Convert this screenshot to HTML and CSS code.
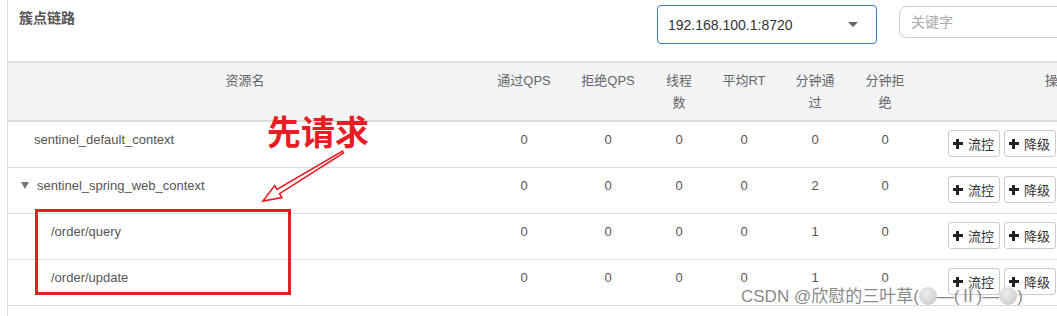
FILE: index.html
```html
<!DOCTYPE html>
<html lang="zh-CN">
<head>
    <meta charset="UTF-8">
    <title>簇点链路</title>
    <link rel="stylesheet" href="styles.css">
</head>
<body>
    <div class="page">
        <div class="panel">
            <div class="toolbar">
                <span class="title">簇点链路</span>
                <div class="machine-select">
                    <span>192.168.100.1:8720</span>
                    <i class="caret"></i>
                </div>
                <input class="search" type="text" placeholder="关键字">
            </div>

            <table class="res-table">
                <colgroup>
                    <col style="width:474px">
                    <col style="width:84px">
                    <col style="width:84px">
                    <col style="width:58px">
                    <col style="width:72px">
                    <col style="width:70px">
                    <col style="width:70px">
                    <col style="width:276px">
                </colgroup>
                <thead>
                    <tr>
                        <th>资源名</th>
                        <th>通过QPS</th>
                        <th>拒绝QPS</th>
                        <th>线程数</th>
                        <th>平均RT</th>
                        <th>分钟通过</th>
                        <th>分钟拒绝</th>
                        <th>操作</th>
                    </tr>
                </thead>
                <tbody>
                    <tr>
                        <td class="name"><span class="leaf">sentinel_default_context</span></td>
                        <td>0</td><td>0</td><td>0</td><td>0</td><td>0</td><td>0</td>
                        <td class="ops">
                            <div class="btns">
                                <button><i class="plus"></i>流控</button>
                                <button><i class="plus"></i>降级</button>
                                <button><i class="plus"></i>热点</button>
                                <button><i class="plus"></i>授权</button>
                            </div>
                        </td>
                    </tr>
                    <tr>
                        <td class="name"><i class="tree-caret"></i>sentinel_spring_web_context</td>
                        <td>0</td><td>0</td><td>0</td><td>0</td><td>2</td><td>0</td>
                        <td class="ops">
                            <div class="btns">
                                <button><i class="plus"></i>流控</button>
                                <button><i class="plus"></i>降级</button>
                                <button><i class="plus"></i>热点</button>
                                <button><i class="plus"></i>授权</button>
                            </div>
                        </td>
                    </tr>
                    <tr>
                        <td class="name"><span class="child">/order/query</span></td>
                        <td>0</td><td>0</td><td>0</td><td>0</td><td>1</td><td>0</td>
                        <td class="ops">
                            <div class="btns">
                                <button><i class="plus"></i>流控</button>
                                <button><i class="plus"></i>降级</button>
                                <button><i class="plus"></i>热点</button>
                                <button><i class="plus"></i>授权</button>
                            </div>
                        </td>
                    </tr>
                    <tr>
                        <td class="name"><span class="child">/order/update</span></td>
                        <td>0</td><td>0</td><td>0</td><td>0</td><td>1</td><td>0</td>
                        <td class="ops">
                            <div class="btns">
                                <button><i class="plus"></i>流控</button>
                                <button><i class="plus"></i>降级</button>
                                <button><i class="plus"></i>热点</button>
                                <button><i class="plus"></i>授权</button>
                            </div>
                        </td>
                    </tr>
                </tbody>
            </table>
        </div>

        <!-- 标注 -->
        <div class="note">先请求</div>
        <svg class="note-arrow" width="100" height="70" viewBox="250 140 100 70">
            <polygon points="263,201 274.7,185.6 277,189.5 342.5,151.1 343.5,152.9 279.6,193.7 281.9,197.6"
                     fill="none" stroke="#e81c24" stroke-width="1.6" stroke-linejoin="miter"/>
        </svg>
        <div class="mark-box"></div>

        <div class="watermark">CSDN @欣慰的三叶草(<i class="dot"></i>—(Ⅱ)—<i class="dot"></i>)</div>
    </div>
</body>
</html>
```

FILE: styles.css
```css
body {
    margin: 0;
    font-family: "Liberation Sans", "Noto Sans CJK SC", sans-serif;
    font-size: 13px;
    color: #555;
    background: #fff;
    overflow: hidden;
}

.page {
    position: relative;
    width: 1057px;
    height: 316px;
    overflow: hidden;
}

.panel {
    margin-left: 7px;
    width: 1188px;
    min-height: 316px;
    border-left: 1px solid #ddd;
}

/* 顶部工具条 */
.toolbar {
    display: flex;
    align-items: flex-start;
    height: 61px;
    padding: 5px 0 0 11px;
    box-sizing: border-box;
}

.title {
    width: 638px;
    margin-top: 3px;
    font-size: 14px;
    line-height: 20px;
    font-weight: bold;
    color: #555;
}

.machine-select {
    width: 220px;
    height: 39px;
    box-sizing: border-box;
    border: 1px solid #3f7cc4;
    border-radius: 4px;
    padding: 0 18px 0 10px;
    display: flex;
    align-items: center;
    justify-content: space-between;
    font-size: 14px;
    color: #333;
}

.caret {
    width: 0;
    height: 0;
    border-left: 5.5px solid transparent;
    border-right: 5.5px solid transparent;
    border-top: 5px solid #666;
}

.search {
    margin: 1px 0 0 22px;
    width: 240px;
    height: 32px;
    box-sizing: border-box;
    border: 1px solid #ccc;
    border-radius: 8px;
    padding: 0 11px;
    font-family: inherit;
    font-size: 14px;
    outline: none;
}

.search::placeholder {
    color: #aaa;
}

/* 资源表格 */
.res-table {
    width: 1188px;
    table-layout: fixed;
    border-collapse: collapse;
}

.res-table th {
    background: #f3f4f6;
    border-top: 2px solid #ddd;
    border-bottom: 2px solid #ddd;
    padding: 7px 10px 6px;
    line-height: 22px;
    font-weight: normal;
    color: #666;
    text-align: center;
    vertical-align: top;
    height: 44px;
}

.res-table td {
    border-bottom: 1px solid #ddd;
    padding: 9px 8px 9px;
    line-height: 18px;
    text-align: center;
    vertical-align: top;
    color: #555;
}

.res-table td.name {
    text-align: left;
    padding-left: 13px;
}

.leaf {
    margin-left: 13px;
}

.child {
    margin-left: 30px;
}

.tree-caret {
    display: inline-block;
    width: 0;
    height: 0;
    margin-right: 8px;
    vertical-align: 1px;
    border-left: 4.5px solid transparent;
    border-right: 4.5px solid transparent;
    border-top: 7px solid #777;
}

.res-table td.ops {
    padding: 8px 8px 10px;
}

.btns {
    display: flex;
    justify-content: center;
    gap: 4px;
    white-space: nowrap;
}

button {
    display: inline-flex;
    align-items: center;
    gap: 5px;
    height: 27px;
    padding: 0 5px 0 4px;
    border: 1px solid #ccc;
    border-radius: 3px;
    background: #fff;
    font-family: inherit;
    font-size: 13px;
    color: #333;
}

.plus {
    position: relative;
    width: 10px;
    height: 10px;
}

.plus::before,
.plus::after {
    content: "";
    position: absolute;
    background: #222;
}

.plus::before {
    left: 0;
    top: 3.5px;
    width: 10px;
    height: 3px;
}

.plus::after {
    left: 3.5px;
    top: 0;
    width: 3px;
    height: 10px;
}

/* 红色标注 */
.note {
    position: absolute;
    left: 267px;
    top: 114px;
    font-family: "Noto Sans CJK SC", sans-serif;
    font-size: 34px;
    line-height: 1;
    font-weight: bold;
    color: #e81c24;
}

.note-arrow {
    position: absolute;
    left: 250px;
    top: 140px;
}

.mark-box {
    position: absolute;
    left: 35px;
    top: 209px;
    width: 256px;
    height: 86px;
    box-sizing: border-box;
    border: 3px solid #e81c24;
}

.watermark {
    position: absolute;
    left: 741px;
    top: 287px;
    font-size: 17px;
    line-height: 20px;
    color: #8a8a8a;
    white-space: nowrap;
}

.dot {
    display: inline-block;
    width: 18px;
    height: 18px;
    border-radius: 50%;
    vertical-align: -3px;
    background: radial-gradient(circle at 40% 35%, #eee, #c4c4c4);
}
```
